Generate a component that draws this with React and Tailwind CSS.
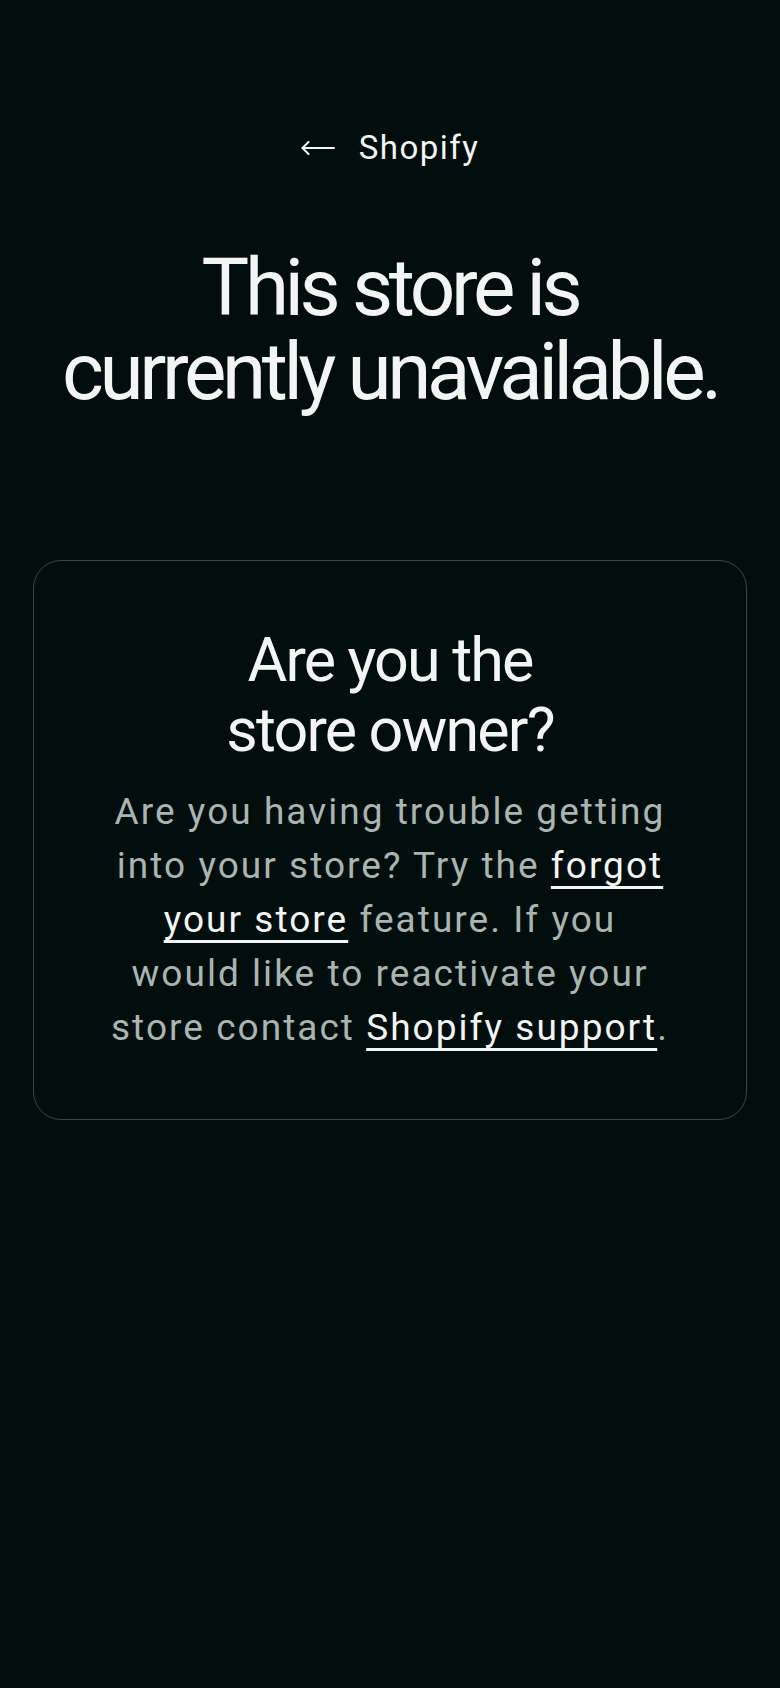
function BackArrow() {
  return (
    <svg width="34" height="14" viewBox="0 0 34 14" fill="none" stroke="currentColor" strokeWidth="2" strokeLinecap="round" strokeLinejoin="round">
      <path d="M33 7H1.5" />
      <path d="M7.5 1L1.5 7l6 6" />
    </svg>
  );
}

export default function App() {
  return (
    <div
      className="min-h-[1688px] w-full bg-[#010e0d] text-[#f3f5f4]"
      style={{ fontFamily: "Roboto, 'Noto Sans', sans-serif" }}
    >
      <div className="flex flex-col items-center pt-[126px]">
        <a href="#" className="flex items-center gap-[24px] text-[33px] leading-[44px] tracking-[0.045em] text-[#f3f5f4]">
          <BackArrow />
          <span>Shopify</span>
        </a>

        <h1 className="mt-[76px] text-center text-[80px] font-normal leading-[84px] tracking-[-0.055em]">
          This store is
          <br />
          currently unavailable.
        </h1>
      </div>

      <div className="mx-[33px] mt-[146px] rounded-[28px] border border-[#3b4645] px-[20px] pt-[64px] pb-[64px] text-center">
        <h2 className="text-[61px] font-normal leading-[70px] tracking-[-0.03em]">
          Are you the
          <br />
          store owner?
        </h2>
        <p className="mt-[20px] text-[37px] leading-[54px] tracking-[0.055em] text-[#aab4b1]">
          Are you having trouble getting
          <br />
          into your store? Try the{" "}
          <a href="#" className="text-[#f3f5f4] underline decoration-[3px] underline-offset-[8px]">
            forgot
            <br />
            your store
          </a>{" "}
          feature. If you
          <br />
          would like to reactivate your
          <br />
          store contact{" "}
          <a href="#" className="text-[#f3f5f4] underline decoration-[3px] underline-offset-[8px]">
            Shopify support
          </a>
          .
        </p>
      </div>
    </div>
  );
}
